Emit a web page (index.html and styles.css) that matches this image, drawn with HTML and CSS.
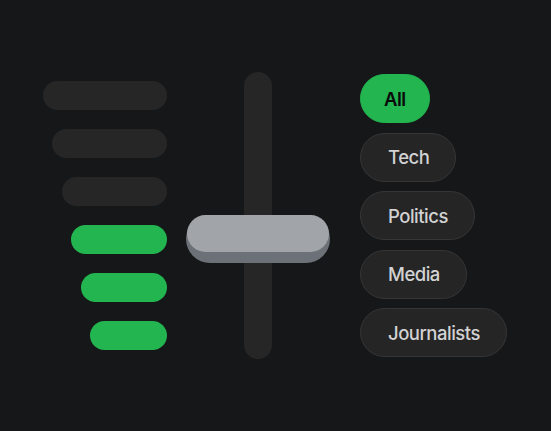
FILE: index.html
```html
<!DOCTYPE html>
<html>
<head>
<meta charset="utf-8">
<link rel="stylesheet" href="styles.css">
</head>
<body>
<div class="stage">
  <div class="bars">
    <div class="bar" style="width:124px"></div>
    <div class="bar" style="width:115px"></div>
    <div class="bar" style="width:105px"></div>
    <div class="bar on" style="width:96px"></div>
    <div class="bar on" style="width:86px"></div>
    <div class="bar on" style="width:77px"></div>
  </div>
  <div class="slider">
    <div class="track"></div>
    <div class="knob"><div class="knob-face"></div></div>
  </div>
  <div class="chips">
    <div class="chip active">All</div>
    <div class="chip">Tech</div>
    <div class="chip">Politics</div>
    <div class="chip">Media</div>
    <div class="chip">Journalists</div>
  </div>
</div>
</body>
</html>
```
FILE: styles.css
```css
html, body {
  margin: 0;
  padding: 0;
  background: #161718;
}
.stage {
  height: 431px;
  width: 551px;
  box-sizing: border-box;
  display: flex;
  align-items: center;
  padding-left: 43px;
  font-family: Inter, "Noto Sans", sans-serif;
}
.bars {
  width: 124px;
  display: flex;
  flex-direction: column;
  align-items: flex-end;
  gap: 19px;
}
.bar {
  height: 29px;
  border-radius: 15px;
  background: #262627;
}
.bar.on {
  background: #22b550;
}
.slider {
  position: relative;
  width: 144px;
  height: 287px;
  margin-left: 19px;
  display: flex;
  justify-content: center;
}
.track {
  width: 28px;
  height: 287px;
  border-radius: 14px;
  background: #262627;
}
.knob {
  position: absolute;
  left: 0;
  top: 143px;
  width: 144px;
  height: 48px;
  border-radius: 24px;
  background: #6b7176;
  box-sizing: border-box;
  padding: 0 1px;
}
.knob-face {
  height: 37px;
  border-radius: 19px;
  background: #a1a5aa;
}
.chips {
  margin-left: 30px;
  display: flex;
  flex-direction: column;
  align-items: flex-start;
  gap: 9.5px;
}
.chip {
  height: 49px;
  box-sizing: border-box;
  padding: 0 26px 0 27px;
  border: 1px solid #363637;
  border-radius: 25px;
  background: #252526;
  color: #d2d2d3;
  font-size: 18.5px;
  font-weight: 500;
  letter-spacing: -0.5px;
  display: flex;
  align-items: center;
}
.chip.active {
  background: #22b550;
  border-color: #22b550;
  color: #0a0a0a;
  padding: 0 23px 0 23px;
  font-weight: 600;
}
```
